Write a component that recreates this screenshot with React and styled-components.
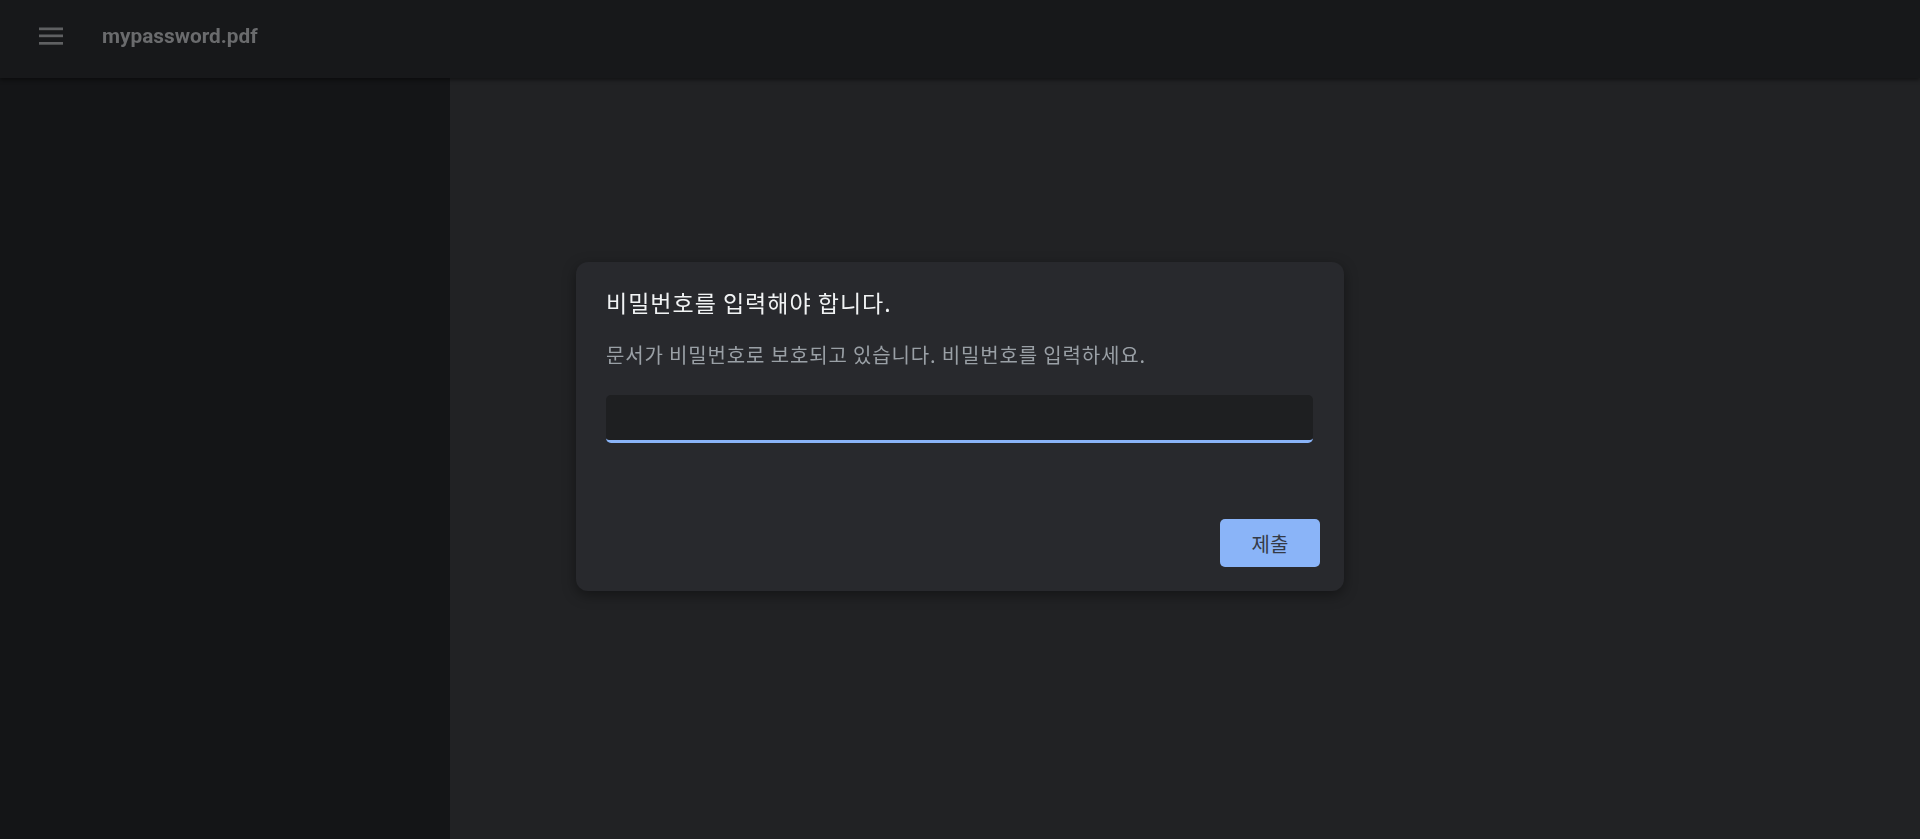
import React from "react";
import styled, { createGlobalStyle } from "styled-components";

const Global = createGlobalStyle`
  html, body {
    margin: 0;
    height: 100%;
    background: #202124;
    font-family: Roboto, "Noto Sans CJK KR", sans-serif;
  }
  #root {
    height: 100%;
  }
`;

const Page = styled.div`
  height: 100vh;
  display: flex;
  flex-direction: column;
  overflow: hidden;
`;

const TopBar = styled.header`
  height: 78px;
  box-sizing: border-box;
  padding-bottom: 6px;
  flex: none;
  display: flex;
  align-items: center;
  background: #17181a;
  box-shadow: 0 2px 4px rgba(0, 0, 0, 0.45);
  position: relative;
  z-index: 1;
`;

const MenuButton = styled.button`
  width: 24px;
  height: 24px;
  margin-left: 39px;
  padding: 0;
  border: 0;
  background: none;
  display: flex;
  align-items: center;
  justify-content: center;
  color: #5f6062;
  cursor: pointer;
`;

const FileName = styled.span`
  margin-left: 39px;
  font-family: Roboto, sans-serif;
  font-size: 20.8px;
  font-weight: 700;
  color: #6a6b6d;
`;

const Body = styled.div`
  flex: 1;
  display: flex;
`;

const Sidebar = styled.aside`
  width: 450px;
  flex: none;
  background: #141517;
`;

const Main = styled.main`
  flex: 1;
  background: #212224;
`;

const Overlay = styled.div`
  position: fixed;
  inset: 0;
  display: flex;
  justify-content: center;
  align-items: flex-start;
  padding: 262px 0 0 0;
  pointer-events: none;
`;

const Dialog = styled.form`
  width: 768px;
  box-sizing: border-box;
  padding: 25px 24px 24px 30px;
  background: #28292d;
  border-radius: 12px;
  box-shadow: 0 4px 14px rgba(0, 0, 0, 0.4);
  display: flex;
  flex-direction: column;
  pointer-events: auto;
`;

const Title = styled.h2`
  margin: 0;
  font-family: "Noto Sans CJK KR", sans-serif;
  font-size: 23px;
  line-height: 30px;
  letter-spacing: 1px;
  font-weight: 400;
  color: #f1f3f4;
`;

const Message = styled.p`
  margin: 24px 0 0;
  font-family: "Noto Sans CJK KR", sans-serif;
  font-size: 20px;
  line-height: 28px;
  letter-spacing: 0.85px;
  font-weight: 400;
  color: #9aa0a6;
`;

const Field = styled.input`
  margin: 26px 7px 0 0;
  height: 48px;
  box-sizing: border-box;
  border: 0;
  border-bottom: 3px solid #8ab4f8;
  border-radius: 5px;
  background: #1e1f21;
  color: #e8eaed;
  font-size: 16px;
  padding: 0 12px;
  outline: none;
`;

const Actions = styled.div`
  display: flex;
  justify-content: flex-end;
  margin-top: 76px;
`;

const Submit = styled.button`
  width: 100px;
  height: 48px;
  border: 0;
  border-radius: 5px;
  background: #8ab4f8;
  color: #343a46;
  font-family: "Noto Sans CJK KR", sans-serif;
  font-size: 20px;
  cursor: pointer;
`;

function MenuIcon() {
  return (
    <svg width="24" height="18" viewBox="0 0 24 18" fill="currentColor">
      <rect x="0" y="0.5" width="24" height="2.7" />
      <rect x="0" y="7.5" width="24" height="2.7" />
      <rect x="0" y="15" width="24" height="2.7" />
    </svg>
  );
}

export default function App() {
  return (
    <Page>
      <Global />
      <TopBar>
        <MenuButton aria-label="메뉴">
          <MenuIcon />
        </MenuButton>
        <FileName>mypassword.pdf</FileName>
      </TopBar>
      <Body>
        <Sidebar />
        <Main />
      </Body>
      <Overlay>
        <Dialog onSubmit={(e) => e.preventDefault()}>
          <Title>비밀번호를 입력해야 합니다.</Title>
          <Message>문서가 비밀번호로 보호되고 있습니다. 비밀번호를 입력하세요.</Message>
          <Field type="password" />
          <Actions>
            <Submit type="submit">제출</Submit>
          </Actions>
        </Dialog>
      </Overlay>
    </Page>
  );
}
